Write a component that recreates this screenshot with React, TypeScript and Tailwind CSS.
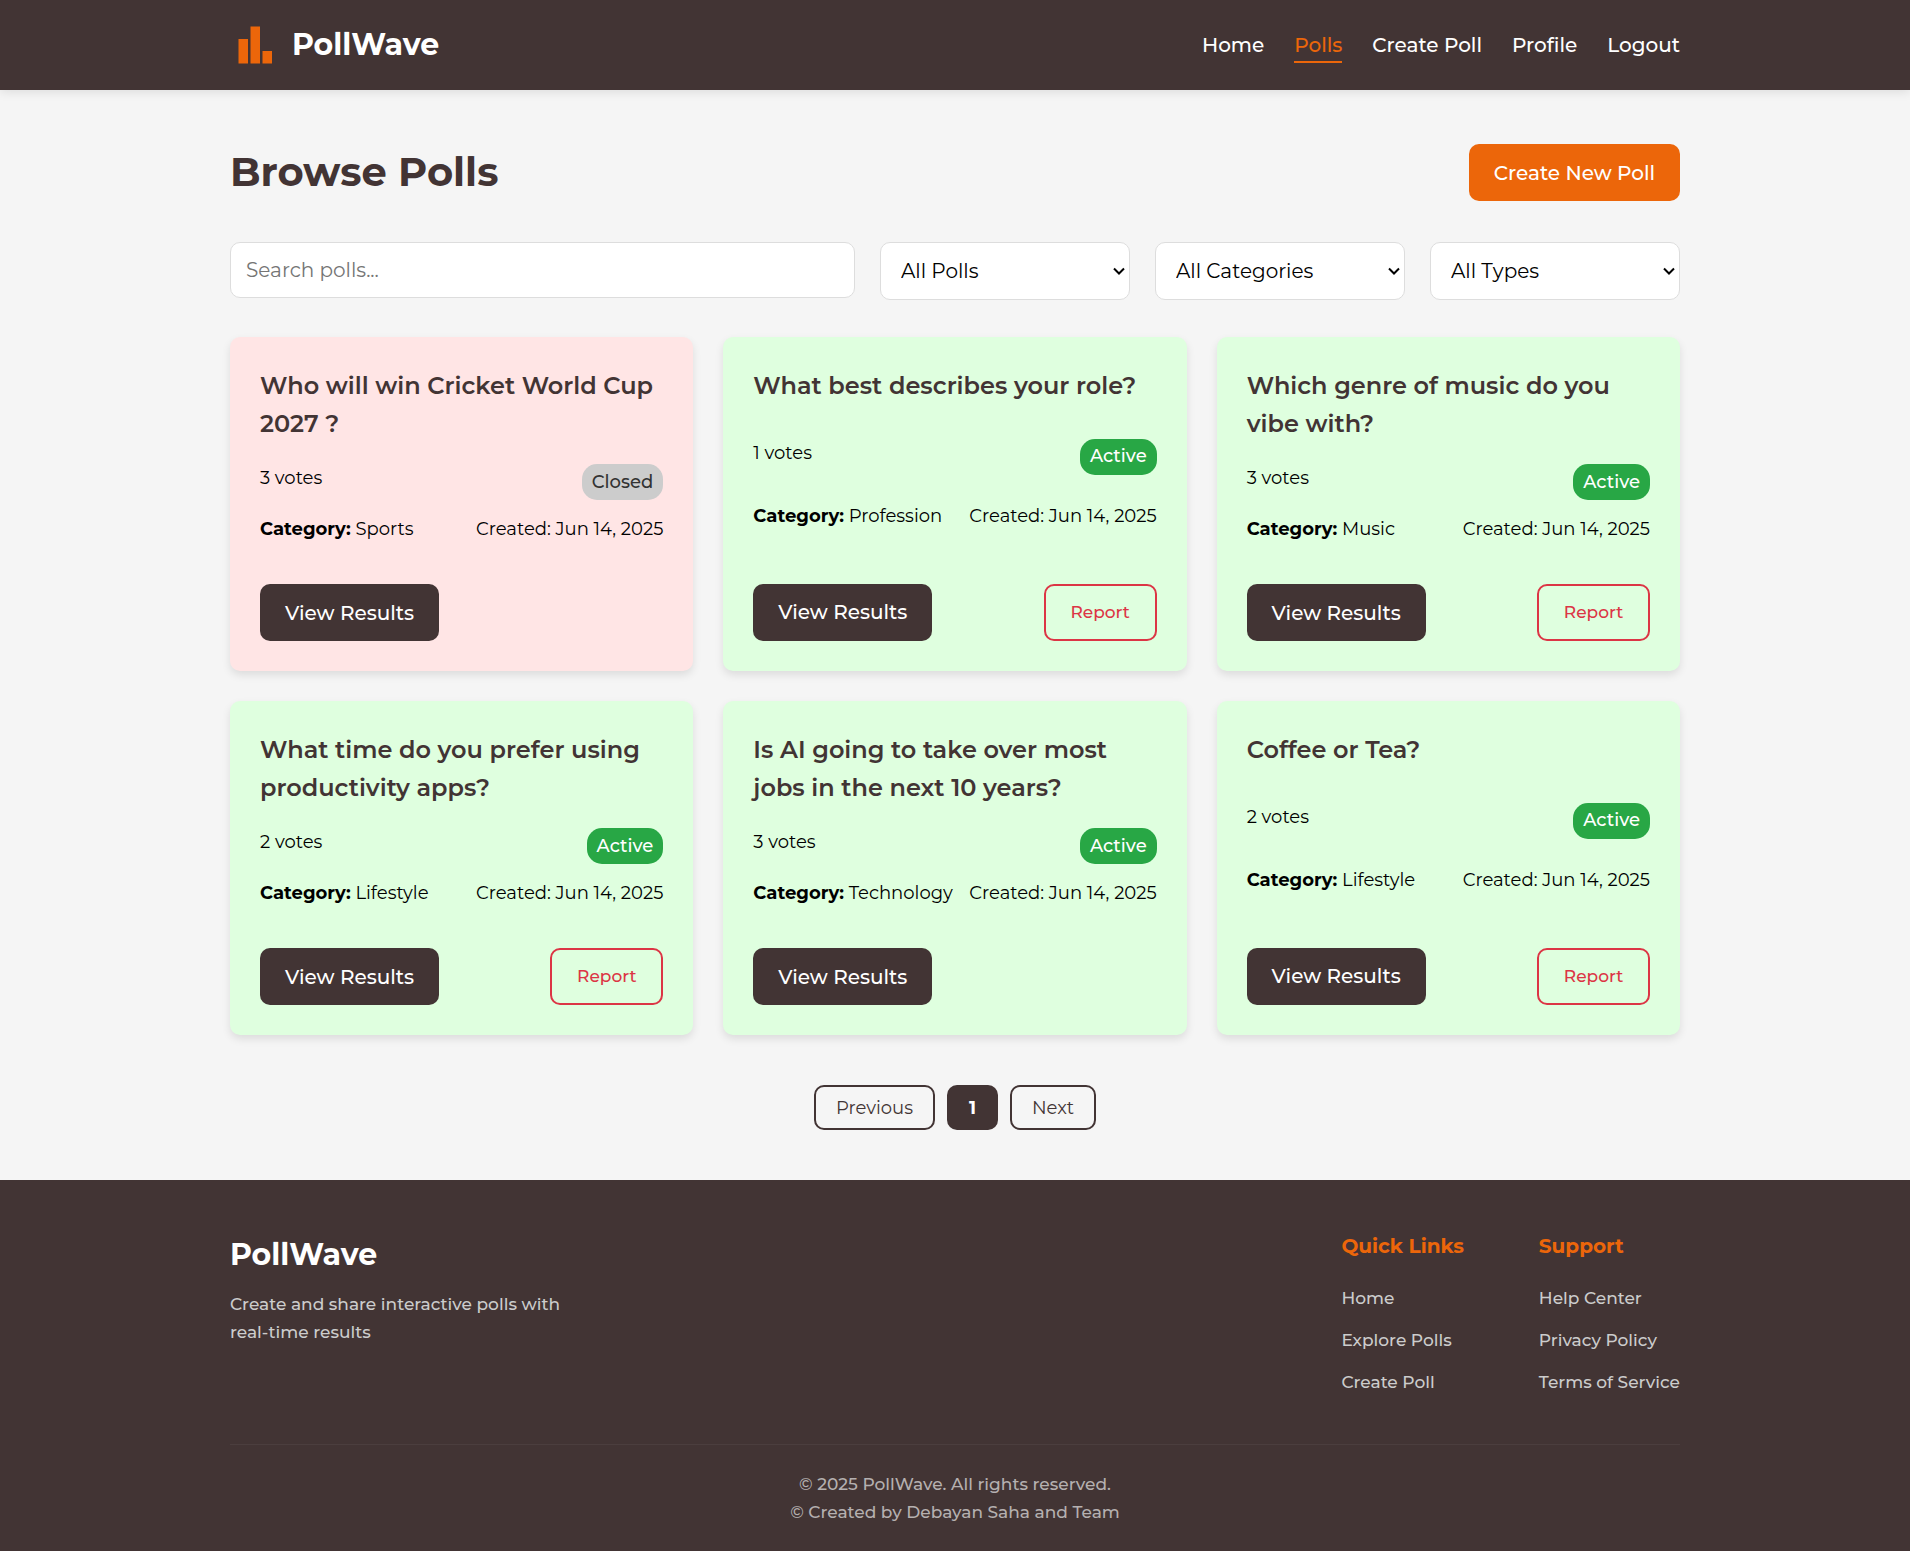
type Poll = {
  title: string;
  votes: number;
  category: string;
  active: boolean;
  canReport: boolean;
};

const polls: Poll[] = [
  { title: 'Who will win Cricket World Cup 2027 ?', votes: 3, category: 'Sports', active: false, canReport: false },
  { title: 'What best describes your role?', votes: 1, category: 'Profession', active: true, canReport: true },
  { title: 'Which genre of music do you vibe with?', votes: 3, category: 'Music', active: true, canReport: true },
  { title: 'What time do you prefer using productivity apps?', votes: 2, category: 'Lifestyle', active: true, canReport: true },
  { title: 'Is AI going to take over most jobs in the next 10 years?', votes: 3, category: 'Technology', active: true, canReport: false },
  { title: 'Coffee or Tea?', votes: 2, category: 'Lifestyle', active: true, canReport: true },
];

const navLinks = ['Home', 'Polls', 'Create Poll', 'Profile', 'Logout'];
const filters = [
  { label: 'Status', value: 'All Polls' },
  { label: 'Category', value: 'All Categories' },
  { label: 'Type', value: 'All Types' },
];
const footerColumns = [
  { heading: 'Quick Links', links: ['Home', 'Explore Polls', 'Create Poll'] },
  { heading: 'Support', links: ['Help Center', 'Privacy Policy', 'Terms of Service'] },
];

function Header() {
  return (
    <header className="relative bg-[#423434] px-5 shadow-[0_2px_10px_rgba(0,0,0,0.1)]">
      <div className="mx-auto flex h-[90px] max-w-[1450px] items-center justify-between">
        <a href="#" className="flex items-center gap-3 text-[30px] leading-[44px] font-bold text-white">
          <svg viewBox="0 0 50 50" className="size-[50px]" fill="#ec660a" aria-hidden="true">
            <rect x="8.5" y="19" width="9.5" height="24.5" />
            <rect x="20.5" y="6.5" width="9.5" height="37" />
            <rect x="32.5" y="31" width="9.5" height="12.5" />
          </svg>
          PollWave
        </a>
        <nav className="flex gap-[30px] text-xl leading-7 font-medium text-white">
          {navLinks.map((name) => (
            <a
              key={name}
              href="#"
              className={
                name === 'Polls'
                  ? 'border-b-2 border-[#ec660a] pt-1 pb-0.5 text-[#ec660a]'
                  : 'border-b-2 border-transparent pt-1 pb-0.5'
              }
            >
              {name}
            </a>
          ))}
        </nav>
      </div>
    </header>
  );
}

function Chevron() {
  return (
    <svg
      viewBox="0 0 12 8"
      className="pointer-events-none absolute top-1/2 right-[5px] h-2 w-3 -translate-y-1/2"
      fill="none"
      stroke="#000000"
      strokeWidth="2"
      aria-hidden="true"
    >
      <path d="M1 1.5 6 6.5 11 1.5" />
    </svg>
  );
}

function PollCard({ poll }: { poll: Poll }) {
  return (
    <article
      className={`flex flex-col justify-between rounded-[10px] p-[30px] shadow-[0_4px_8px_rgba(0,0,0,0.1)] ${
        poll.active ? 'bg-[#dfffdf]' : 'bg-[#ffe5e5]'
      }`}
    >
      <h2 className="mb-[21px] text-2xl leading-[38px] font-semibold text-[#423434]">{poll.title}</h2>
      <div className="mb-[15px] flex items-start justify-between text-lg leading-[29px]">
        <span>{poll.votes} votes</span>
        <span
          className={`flex h-9 items-center rounded-[15px] px-2.5 font-medium ${
            poll.active ? 'bg-[#28a745] text-white' : 'bg-[#cccccc] text-[#333333]'
          }`}
        >
          {poll.active ? 'Active' : 'Closed'}
        </span>
      </div>
      <div className="mb-10 flex items-center justify-between text-lg leading-[29px] whitespace-nowrap">
        <span>
          <strong className="font-bold">Category:</strong> {poll.category}
        </span>
        <span>Created: Jun 14, 2025</span>
      </div>
      <div className="flex justify-between">
        <button type="button" className="h-[57px] min-w-[179px] rounded-[10px] bg-[#423434] text-xl font-medium text-white">
          View Results
        </button>
        {poll.canReport && (
          <button type="button" className="h-[57px] min-w-[113px] rounded-[10px] border-2 border-[#dc3545] text-[17px] font-medium text-[#dc3545]">
            Report
          </button>
        )}
      </div>
    </article>
  );
}

function Footer() {
  return (
    <footer className="bg-[#423434] px-5 pt-[50px] pb-[25px] text-[17px] leading-7 font-medium text-[#cccccc]">
      <div className="mx-auto max-w-[1450px]">
        <div className="flex justify-between border-b border-[#4b3e3e] pb-12">
          <div className="w-[350px]">
            <h2 className="mb-2.5 text-[30px] leading-[50px] font-bold text-white">PollWave</h2>
            <p>Create and share interactive polls with real-time results</p>
          </div>
          <div className="flex gap-[75px]">
            {footerColumns.map((column) => (
              <section key={column.heading}>
                <h3 className="mb-[22px] text-xl leading-8 font-bold text-[#ec660a]">{column.heading}</h3>
                <ul className="flex flex-col gap-3.5">
                  {column.links.map((link) => (
                    <li key={link}>
                      <a href="#">{link}</a>
                    </li>
                  ))}
                </ul>
              </section>
            ))}
          </div>
        </div>
        <div className="pt-[25px] text-center text-[#b5b0b0]">
          <p>© 2025 PollWave. All rights reserved.</p>
          <p>© Created by Debayan Saha and Team</p>
        </div>
      </div>
    </footer>
  );
}

export default function App() {
  return (
    <div className="flex min-h-screen flex-col bg-[#f5f5f5] font-['Montserrat','Inter',sans-serif] text-black">
      <Header />
      <main className="grow px-5 pt-[54px] pb-[50px]">
        <div className="mx-auto max-w-[1450px]">
          <div className="mb-[41px] flex items-start justify-between">
            <h1 className="text-[40px] leading-[56px] font-bold text-[#423434]">Browse Polls</h1>
            <button type="button" className="h-[57px] min-w-[211px] rounded-[10px] bg-[#ec660a] text-xl font-medium text-white">
              Create New Poll
            </button>
          </div>
          <div className="mb-[37px] flex items-start gap-[25px] text-xl">
            <input
              type="text"
              aria-label="Search polls"
              placeholder="Search polls..."
              className="h-14 min-w-0 grow rounded-[10px] border border-[#dddddd] bg-white px-[15px] placeholder:text-[#757575]"
            />
            {filters.map((filter) => (
              <div key={filter.label} className="relative w-[250px]">
                <select
                  aria-label={filter.label}
                  className="h-[58px] w-full appearance-none rounded-[10px] border border-[#dddddd] bg-white px-5"
                >
                  <option>{filter.value}</option>
                </select>
                <Chevron />
              </div>
            ))}
          </div>
          <div className="grid grid-cols-3 gap-[30px]">
            {polls.map((poll) => (
              <PollCard key={poll.title} poll={poll} />
            ))}
          </div>
          <nav aria-label="Pagination" className="mt-[50px] flex justify-center gap-3 text-lg text-[#423434]">
            <button type="button" className="h-[45px] min-w-[121px] rounded-[10px] border-2 border-[#423434]">
              Previous
            </button>
            <button type="button" aria-current="page" className="h-[45px] min-w-[51px] rounded-[10px] bg-[#423434] font-bold text-white">
              1
            </button>
            <button type="button" className="h-[45px] min-w-[86px] rounded-[10px] border-2 border-[#423434]">
              Next
            </button>
          </nav>
        </div>
      </main>
      <Footer />
    </div>
  );
}
